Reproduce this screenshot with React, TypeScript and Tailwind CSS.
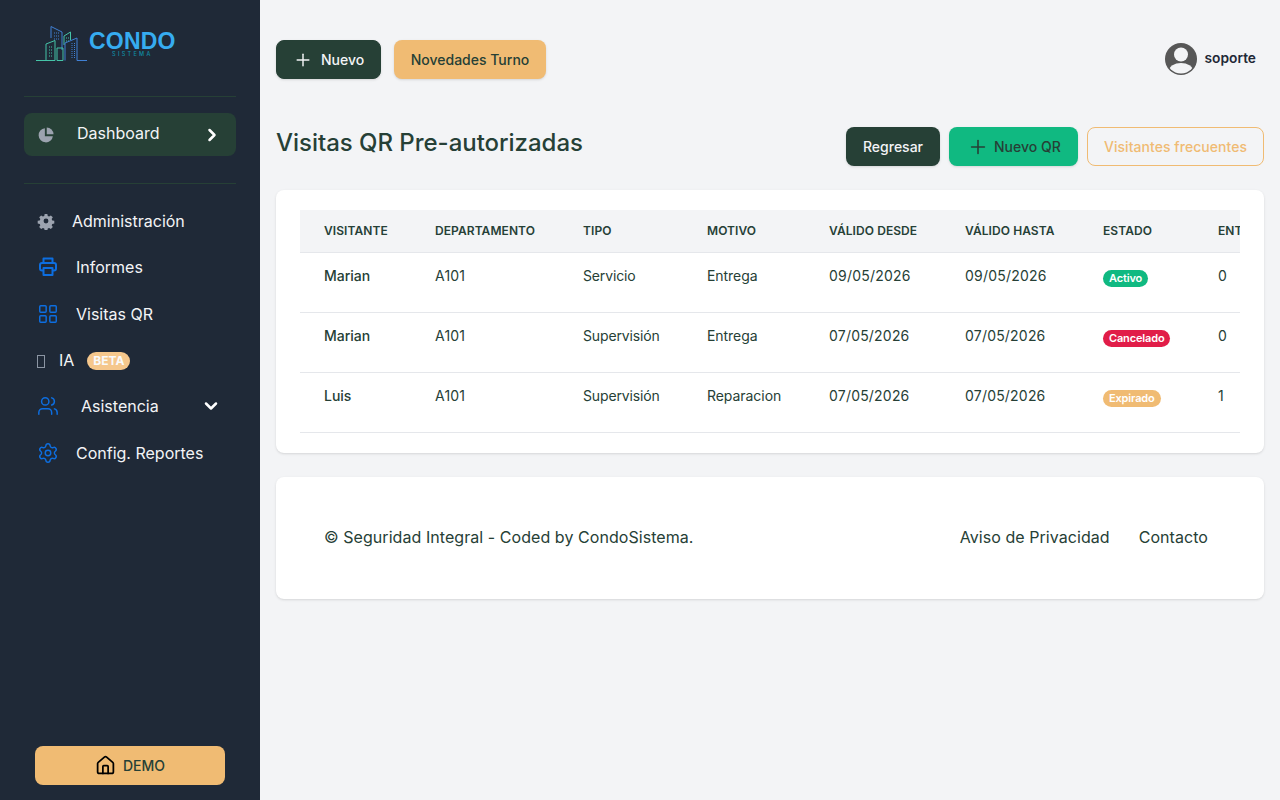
import { ChevronDown, ChevronRight, House, LayoutGrid, Plus, Settings, Users } from 'lucide-react';

const rows = [
  { name: 'Marian', depto: 'A101', tipo: 'Servicio', motivo: 'Entrega', desde: '09/05/2026', hasta: '09/05/2026', estado: 'Activo', color: 'bg-[#10b981]', entradas: '0' },
  { name: 'Marian', depto: 'A101', tipo: 'Supervisión', motivo: 'Entrega', desde: '07/05/2026', hasta: '07/05/2026', estado: 'Cancelado', color: 'bg-[#e11d48]', entradas: '0' },
  { name: 'Luis', depto: 'A101', tipo: 'Supervisión', motivo: 'Reparacion', desde: '07/05/2026', hasta: '07/05/2026', estado: 'Expirado', color: 'bg-[#f0bb73]', entradas: '1' },
];

const columns = [
  { label: 'VISITANTE', width: 'w-[111px]' },
  { label: 'DEPARTAMENTO', width: 'w-[148px]' },
  { label: 'TIPO', width: 'w-[124px]' },
  { label: 'MOTIVO', width: 'w-[122px]' },
  { label: 'VÁLIDO DESDE', width: 'w-[136px]' },
  { label: 'VÁLIDO HASTA', width: 'w-[138px]' },
  { label: 'ESTADO', width: 'w-[115px]' },
  { label: 'ENTRADAS', width: 'w-[110px]' },
];

function Logo() {
  return (
    <svg width="52" height="36" viewBox="0 0 52 36" fill="none" strokeWidth="1">
      <path d="M0 34.500H19M10 34.500V18L19 14.500V34.500" stroke="#45c4a8" />
      <path d="M13 21h4M13 24h4M13 27h4M13 30h4" stroke="#45c4a8" strokeDasharray="1 1" />
      <path d="M15 12V0.500L26 6V24" stroke="#4080d4" />
      <path d="M18 7h6M18 10h6M18 13h6" stroke="#4080d4" strokeDasharray="1 1" />
      <path d="M21 34.500V22H27V34.500M21 34.500H27" stroke="#45c4a8" />
      <path d="M28 19V10L34.500 6V14" stroke="#45c4a8" />
      <path d="M30 12h3M30 15h3" stroke="#45c4a8" strokeDasharray="1 1" />
      <path d="M29 34.500V17L41 12V34.500H51" stroke="#4080d4" />
      <path d="M36 17V33M38.500 17V33" stroke="#4080d4" strokeDasharray="1 1" />
    </svg>
  );
}

function PieIcon() {
  return (
    <svg width="16" height="16" viewBox="0 0 17 17" fill="#9ca3af">
      <path d="M7.3 1.2v8.5h8.500A7.600 7.600 0 1 1 7.300 1.200Z" />
      <path d="M9.300.5a7.400 7.400 0 0 1 7.200 7.200H9.300Z" />
    </svg>
  );
}

function GearFilled() {
  return (
    <svg width="18" height="18" viewBox="0 0 24 24" fill="#9ca3af">
      <path
        fillRule="evenodd"
        d="M10 1.500h4l.6 3 2 .9 2.600-1.700 2.900 2.900-1.700 2.600.9 2 3 .6v4l-3 .6-.9 2 1.700 2.600-2.900 2.900-2.600-1.700-2 .9-.6 2.900h-4l-.6-2.900-2-.9-2.600 1.700-2.900-2.900 1.700-2.600-.9-2-3-.6v-4l3-.6.9-2-1.700-2.600 2.900-2.900 2.600 1.700 2-.9Z M12 8.400a3.600 3.600 0 1 0 0 7.200 3.600 3.600 0 0 0 0-7.200Z"
        transform="translate(1.2 1.2) scale(0.9)"
      />
    </svg>
  );
}

function PrinterIcon() {
  return (
    <svg width="20" height="20" viewBox="0 0 20 20" fill="none" stroke="#0d6ee0" strokeWidth="2" strokeLinejoin="round">
      <path d="M5.500 6V1.500h9V6" />
      <rect x="2" y="6" width="16" height="7.500" rx="2" />
      <rect x="5.500" y="11" width="9" height="7" fill="#1f2937" />
    </svg>
  );
}

function UserAvatar() {
  return (
    <svg width="32" height="32" viewBox="0 0 32 32">
      <defs>
        <clipPath id="avatar-clip">
          <circle cx="16" cy="16" r="14.500" />
        </clipPath>
      </defs>
      <circle cx="16" cy="16" r="16" fill="#575757" />
      <circle cx="16" cy="11.500" r="7" fill="#f3f4f6" />
      <ellipse cx="16" cy="27.500" rx="12" ry="7.500" fill="#f3f4f6" clipPath="url(#avatar-clip)" />
    </svg>
  );
}

export default function App() {
  return (
    <div className="flex h-[800px] w-[1280px] overflow-hidden bg-[#f3f4f6] font-['Inter',sans-serif] text-[#264036]">
      <aside className="flex w-[260px] shrink-0 flex-col bg-[#1f2937] px-6 text-[#f3f4f6]">
        <div className="mt-[26px] flex h-9 items-start pl-3">
          <Logo />
          <div className="ml-[1px] flex flex-col items-center pt-[6px]">
            <span className="font-['Liberation_Sans',sans-serif] text-[23px] leading-[19px] font-bold tracking-[0.2px] text-[#36acf0]">CONDO</span>
            <span className="text-[5.500px] leading-[6px] font-medium tracking-[2.300px] text-[#0f8fa8]">SISTEMA</span>
          </div>
        </div>

        <div className="mt-[34px] h-px bg-[#264036]" />
        <div className="mt-4 flex h-[43px] items-center rounded-lg bg-[#264036] pr-[14px] pl-[14px]">
          <PieIcon />
          <span className="ml-[23px] flex-1 pb-[4px] text-base leading-6">Dashboard</span>
          <ChevronRight size={20} strokeWidth={3} className="text-white" />
        </div>
        <div className="mt-[27px] h-px bg-[#264036]" />

        <nav className="mt-[13px] flex flex-col text-base leading-6">
          <div className="flex h-[47px] items-center pl-[13px]">
            <GearFilled />
            <span className="ml-[17px]">Administración</span>
          </div>
          <div className="flex h-[46px] items-center pl-[14px]">
            <PrinterIcon />
            <span className="ml-[18px]">Informes</span>
          </div>
          <div className="flex h-[47px] items-center pl-[13px]">
            <LayoutGrid size={22} strokeWidth={1.6} className="text-[#0d6ee0]" />
            <span className="ml-[17px]">Visitas QR</span>
          </div>
          <div className="flex h-[46px] items-center pl-[13px]">
            <span className="mt-[2px] h-[13px] w-2 border border-[#8b95a3]" />
            <span className="ml-[14px]">IA</span>
            <span className="mt-[2px] ml-[13px] rounded-full bg-[#f5c78c] px-[6px] text-[12px] leading-[18px] font-bold text-[#f9fafb]">BETA</span>
          </div>
          <div className="flex h-[46px] items-center pr-[15px] pl-[13px]">
            <Users size={22} strokeWidth={1.6} className="text-[#0d6ee0]" />
            <span className="ml-[22px] flex-1">Asistencia</span>
            <ChevronDown size={20} strokeWidth={3} className="text-white" />
          </div>
          <div className="flex h-[47px] items-center pl-[13px]">
            <Settings size={22} strokeWidth={1.6} className="text-[#0d6ee0]" />
            <span className="ml-[17px]">Config. Reportes</span>
          </div>
        </nav>

        <button className="mx-[11px] mt-auto mb-[15px] flex h-[39px] items-center justify-center gap-[7px] rounded-lg bg-[#f0bb73] text-sm font-medium text-[#264036]">
          <House size={21} strokeWidth={2} className="text-black" />
          DEMO
        </button>
      </aside>

      <main className="flex min-w-0 flex-1 flex-col px-4">
        <div className="mt-10 flex h-[39px] items-center">
          <button className="flex h-[39px] w-[105px] items-center gap-2 rounded-lg border border-[#264036] bg-[#264036] pl-[16px] text-sm font-medium text-[#f3f4f6] shadow-sm">
            <Plus size={20} strokeWidth={1.75} />
            Nuevo
          </button>
          <button className="ml-[13px] h-[39px] w-[152px] rounded-lg bg-[#f0bb73] text-sm font-medium text-[#264036] shadow-sm">Novedades Turno</button>
          <div className="mt-[-2px] ml-auto flex items-center gap-2 pr-2">
            <UserAvatar />
            <span className="text-[13.750px] font-semibold text-[#1f2937]">soporte</span>
          </div>
        </div>

        <div className="mt-[48px] flex h-[39px] items-center justify-between">
          <h1 className="mt-[-8px] text-2xl font-medium tracking-[-0.03px] text-[#264036]">Visitas QR Pre-autorizadas</h1>
          <div className="flex items-center gap-[9px]">
            <button className="h-[39px] w-[94px] rounded-lg bg-[#264036] text-sm font-medium text-[#f3f4f6] shadow-sm">Regresar</button>
            <button className="flex h-[39px] w-[129px] items-center gap-[5px] rounded-lg bg-[#10b981] pl-[18px] text-sm font-medium text-[#264036] shadow-sm">
              <Plus size={22} strokeWidth={1.75} />
              Nuevo QR
            </button>
            <button className="h-[39px] w-[177px] rounded-lg border border-[#f0bb73] text-sm font-medium tracking-[0.05px] text-[#f0bb73]">Visitantes frecuentes</button>
          </div>
        </div>

        <section className="mt-[24px] h-[263px] rounded-lg bg-white px-6 pt-5 shadow-sm">
          <div className="overflow-hidden">
            <table className="w-[1004px] table-fixed border-collapse text-left">
              <thead>
                <tr className="h-[42px] border-b border-[#e5e7eb] bg-[#f3f4f6]">
                  {columns.map((col) => (
                    <th key={col.label} className={`${col.width} pl-6 text-xs font-semibold tracking-[0.08px] whitespace-nowrap`}>
                      {col.label}
                    </th>
                  ))}
                </tr>
              </thead>
              <tbody className="text-sm">
                {rows.map((row, i) => (
                  <tr key={i} className="h-[60px] border-b border-[#e5e7eb] align-top">
                    <td className="pt-[13px] pl-6 font-medium">{row.name}</td>
                    <td className="pt-[13px] pl-6 tracking-[0.2px]">{row.depto}</td>
                    <td className="pt-[13px] pl-6 tracking-[-0.15px]">{row.tipo}</td>
                    <td className="pt-[13px] pl-6 tracking-[-0.05px]">{row.motivo}</td>
                    <td className="pt-[13px] pl-6 tracking-[0.2px]">{row.desde}</td>
                    <td className="pt-[13px] pl-6 tracking-[0.2px]">{row.hasta}</td>
                    <td className="pt-[17px] pl-6">
                      <span className={`${row.color} block w-fit rounded-full px-[6px] text-[11px] leading-[17px] font-semibold tracking-[-0.15px] text-white`}>{row.estado}</span>
                    </td>
                    <td className="pt-[13px] pl-6">{row.entradas}</td>
                  </tr>
                ))}
              </tbody>
            </table>
          </div>
        </section>

        <footer className="mt-[24px] flex h-[122px] items-center justify-between rounded-lg bg-white pr-[56px] pb-[2px] pl-[48px] text-base tracking-[0.06px] shadow-sm">
          <span>© Seguridad Integral - Coded by CondoSistema.</span>
          <div className="flex gap-[29px]">
            <span>Aviso de Privacidad</span>
            <span>Contacto</span>
          </div>
        </footer>
      </main>
    </div>
  );
}
